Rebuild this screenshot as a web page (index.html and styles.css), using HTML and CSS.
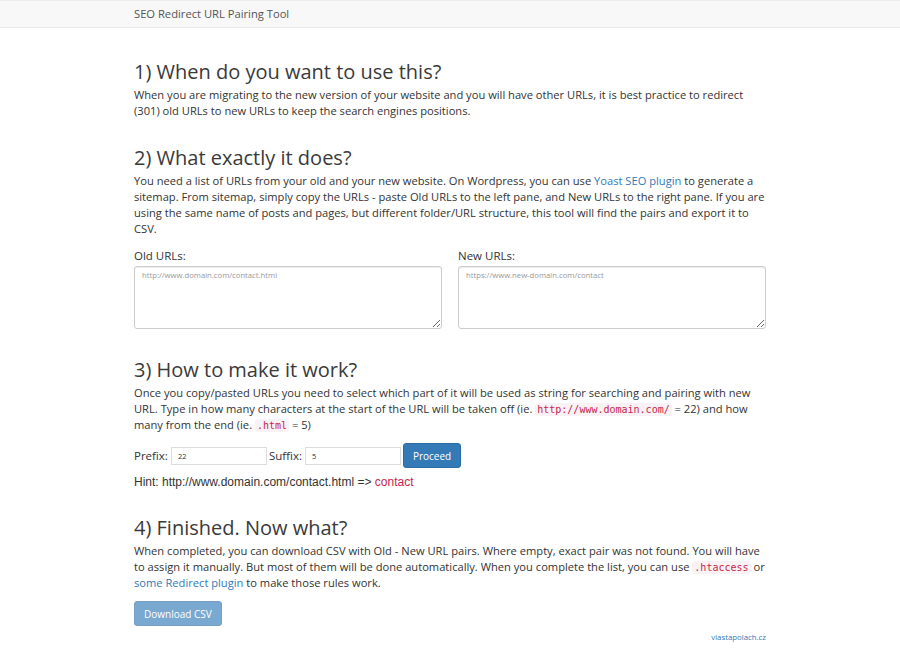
FILE: index.html
```html
<!DOCTYPE html>
<html>
<head>
<meta charset="utf-8">
<title>SEO Redirect URL Pairing Tool</title>
<link rel="stylesheet" href="styles.css">
</head>
<body>
<nav class="navbar">
  <div class="container"><span class="brand">SEO Redirect URL Pairing Tool</span></div>
</nav>
<main class="container">
  <section class="sec sec1">
    <h2>1) When do you want to use this?</h2>
    <p>When you are migrating to the new version of your website and you will have other URLs, it is best practice to redirect (301) old URLs to new URLs to keep the search engines positions.</p>
  </section>
  <section class="sec sec2">
    <h2>2) What exactly it does?</h2>
    <p>You need a list of URLs from your old and your new website. On Wordpress, you can use <a href="#">Yoast SEO plugin</a> to generate a sitemap. From sitemap, simply copy the URLs - paste Old URLs to the left pane, and New URLs to the right pane. If you are using the same name of posts and pages, but different folder/URL structure, this tool will find the pairs and export it to CSV.</p>
    <div class="panes">
      <div class="pane">
        <label>Old URLs:</label>
        <textarea placeholder="http://www.domain.com/contact.html"></textarea>
      </div>
      <div class="pane">
        <label>New URLs:</label>
        <textarea placeholder="https://www.new-domain.com/contact"></textarea>
      </div>
    </div>
  </section>
  <section class="sec sec3">
    <h2>3) How to make it work?</h2>
    <p>Once you copy/pasted URLs you need to select which part of it will be used as string for searching and pairing with new URL. Type in how many characters at the start of the URL will be taken off (ie. <code>http://www.domain.com/</code> = 22) and how many from the end (ie. <code>.html</code> = 5)</p>
    <div class="formrow">
      <label>Prefix:</label><input class="num" value="22">
      <label>Suffix:</label><input class="num" value="5">
      <button class="btn">Proceed</button>
    </div>
    <div class="hint">Hint: http://www.domain.com/contact.html =&gt; <span class="red">contact</span></div>
  </section>
  <section class="sec sec4">
    <h2>4) Finished. Now what?</h2>
    <p>When completed, you can download CSV with Old - New URL pairs. Where empty, exact pair was not found. You will have<br>to assign it manually. But most of them will be done automatically. When you complete the list, you can use <code>.htaccess</code> or <a href="#">some Redirect plugin</a> to make those rules work.</p>
    <button class="btn btn-disabled">Download CSV</button>
  </section>
  <footer class="foot"><a href="#">vlastapolach.cz</a></footer>
</main>
</body>
</html>
```
FILE: styles.css
```css
* { box-sizing: border-box; }
html, body { margin: 0; padding: 0; background: #fff; }
body {
  font-family: "Open Sans", "Liberation Sans", sans-serif;
  font-size: 11.15px;
  line-height: 16px;
  color: #333;
}
a { color: #337ab7; text-decoration: none; }
.container { width: 632px; margin: 0 auto; }
.navbar {
  height: 28px;
  background: #f8f8f8;
  border-top: 1px solid #ececec;
  border-bottom: 1px solid #e7e7e7;
}
.navbar .container { display: flex; align-items: center; height: 26px; }
.brand { font-size: 11.2px; color: #555; }
main { padding-top: 32px; }
.sec { margin-bottom: 27px; }
.sec2 { margin-bottom: 29px; }
.sec3 { margin-bottom: 26px; }
h2 {
  margin: 0 0 3px;
  font-weight: 400;
  font-size: 20px;
  line-height: 24px;
  color: #3a3a3a;
}
p { margin: 0; }
code {
  font-family: "DejaVu Sans Mono", monospace;
  font-size: 10px;
  line-height: 12px;
  letter-spacing: 0;
  color: #c7254e;
  background: #f9f2f4;
  padding: 1px 2px;
  border-radius: 3px;
}
.panes {
  display: grid;
  grid-template-columns: 1fr 1fr;
  gap: 16px;
  margin-top: 11px;
}
.pane label { display: block; font-size: 11.5px; margin-bottom: 2px; }
textarea {
  display: block;
  width: 100%;
  height: 63px;
  border: 1px solid #ccc;
  border-radius: 3px;
  padding: 3px 7px;
  font-family: "Open Sans", sans-serif;
  font-size: 7.7px;
  box-shadow: inset 0 1px 1px rgba(0,0,0,.075);
  resize: vertical;
}
textarea::placeholder { color: #999; }
.formrow {
  display: flex;
  align-items: center;
  margin-top: 10px;
  height: 25px;
}
.formrow label { font-size: 11.5px; margin-right: 3px; }
.num {
  width: 96px;
  height: 18px;
  border: 1px solid #ddd;
  padding: 0 6px;
  font-family: "Open Sans", sans-serif;
  font-size: 7.5px;
  color: #333;
  margin-right: 2px;
}
.btn {
  font-family: "Open Sans", sans-serif;
  font-size: 10px;
  color: #fff;
  background: #337ab7;
  border: 1px solid #2e6da4;
  border-radius: 3px;
  height: 25px;
  padding: 0 9px;
}
.hint {
  margin-top: 6px;
  font-family: "Liberation Sans", Arial, sans-serif;
  font-size: 12px;
  line-height: 16px;
}
.red { color: #c7254e; }
.btn-disabled {
  margin-top: 10px;
  opacity: .65;
  padding: 0 9px;
}
.foot {
  text-align: right;
  font-size: 7.8px;
  line-height: 12px;
  margin-top: -22px;
}
```
